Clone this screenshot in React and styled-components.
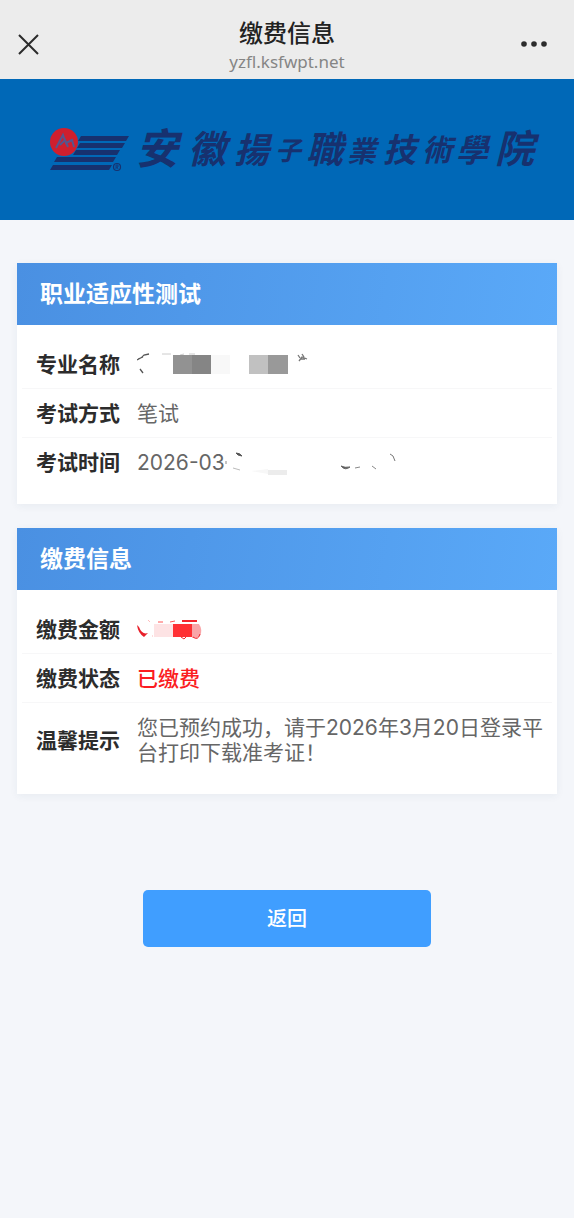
import React from 'react';
import styled, { createGlobalStyle } from 'styled-components';

const GlobalStyle = createGlobalStyle`
  * { box-sizing: border-box; }
  body {
    margin: 0;
    background: #f4f6fa;
    color: #303133;
    font-family: Inter, "Noto Sans CJK SC", sans-serif;
  }
`;

const TopBar = styled.header`
  display: flex;
  align-items: center;
  justify-content: space-between;
  height: 79px;
  padding: 13px 16px 0;
  background: #ececec;
`;

const IconButton = styled.button`
  display: flex;
  padding: 0 0 4px;
  border: 0;
  background: none;
  color: #2b2b2b;
  cursor: pointer;
`;

const PageHeading = styled.div`
  text-align: center;
`;

const PageTitle = styled.h1`
  margin: 0;
  font-size: 24px;
  line-height: 32px;
  font-weight: 500;
  color: #222;
`;

const PageHost = styled.div`
  font-family: "Noto Sans", sans-serif;
  font-size: 17px;
  line-height: 24px;
  color: #858585;
`;

const Banner = styled.div`
  display: flex;
  justify-content: center;
  height: 141px;
  background: #0068b7;

  svg {
    width: 100%;
    height: 100%;
  }
`;

const Main = styled.main`
  display: flex;
  flex-direction: column;
  gap: 24px;
  padding: 43px 17px;
`;

const Card = styled.section`
  background: #fff;
  box-shadow: 0 2px 8px rgba(40, 60, 100, 0.06);
`;

const CardTitle = styled.h2`
  margin: 0;
  padding: 15px 23px;
  font-size: 23px;
  line-height: 32px;
  font-weight: 700;
  color: #fff;
  background: linear-gradient(100deg, #4a90e2, #5aa9f8);
`;

const Details = styled.dl`
  margin: 0;
  padding: 15px 5px 17px;
`;

const Row = styled.div`
  display: flex;
  align-items: center;
  padding: 12px 0 12px 14px;
  font-size: 21px;
  line-height: 25px;

  & + & {
    box-shadow: 0 -1px #f7f7f8;
  }
`;

const Label = styled.dt`
  flex: 0 0 101px;
  font-weight: 700;
  color: #2c2c2c;
`;

const Value = styled.dd`
  display: flex;
  flex: 1;
  margin: 0;
  color: ${(p) => (p.$alert ? '#fb1d22' : '#666')};
  font-weight: ${(p) => (p.$alert ? 500 : 400)};

  svg {
    display: block;
    flex: none;
  }
`;

const BackButton = styled.button`
  align-self: center;
  width: 288px;
  max-width: 100%;
  height: 57px;
  margin-top: 72px;
  padding: 0 0 2px;
  border: 0;
  border-radius: 5px;
  background: #409eff;
  color: #fff;
  font-family: inherit;
  font-size: 20px;
  font-weight: 500;
  cursor: pointer;
`;

// Character, left edge, baseline and size within the school wordmark.
const wordmark = [
  ['安', 136, 85, 42],
  ['徽', 188, 84, 38],
  ['揚', 234, 84, 35],
  ['子', 275, 81, 26],
  ['職', 306, 84, 37],
  ['業', 347, 83, 29],
  ['技', 383, 83, 33],
  ['術', 422, 82, 30],
  ['學', 456, 83, 32],
  ['院', 495, 84, 39],
];

function SchoolLogo() {
  return (
    <svg viewBox="0 0 574 141" role="img" aria-label="安徽揚子職業技術學院">
      <path
        fill="#17316f"
        d="M81 57H129L126 62H78ZM80 64H125L122 69H77ZM76 71H120L117 76H73ZM57 78H116L113 83H54ZM53 86H112L109 91H50Z"
      />
      <circle cx="64" cy="63" r="14" fill="#cf1f2e" />
      <path d="M56 69L63 56L66 64L72 61L74 68M60 66L65 61L68 68" fill="none" stroke="#57558d" strokeWidth="2" />
      <circle cx="117" cy="88" r="3.5" fill="none" stroke="#17316f" strokeWidth="1.2" />
      <path d="M116 90V86H118V88H116M117 88L118 90" fill="none" stroke="#17316f" strokeWidth="0.8" />
      <text
        fill="#17316f"
        fontFamily="'Noto Sans CJK TC', sans-serif"
        fontWeight="700"
        fontStyle="italic"
      >
        {wordmark.map(([char, x, y, size]) => (
          <tspan key={char} x={x} y={y} fontSize={size}>{char}</tspan>
        ))}
      </text>
    </svg>
  );
}

function MaskedMajor() {
  return (
    <svg width="174" height="25" viewBox="0 0 174 25" aria-hidden="true">
      <path d="M0 8Q5 6 7 3L12 2M1 7L6 5M3 17L6 21" fill="none" stroke="#555" strokeWidth="1.3" />
      <path d="M25 2H34M43 3L47 2M52 2H58" fill="none" stroke="#ccc" />
      <rect x="36" y="3" width="19" height="19" fill="#929292" />
      <rect x="55" y="3" width="19" height="19" fill="#858585" />
      <rect x="74" y="3" width="19" height="19" fill="#f8f8f8" />
      <rect x="112" y="3" width="19" height="19" fill="#c1c1c1" />
      <rect x="131" y="3" width="20" height="19" fill="#999" />
      <path d="M161 3L163 6M165 2L167 5M162 9L165 5L170 7M164 7H168" fill="none" stroke="#777" strokeWidth="1.3" />
    </svg>
  );
}

function MaskedTime() {
  return (
    <svg width="180" height="25" viewBox="0 0 180 25" aria-hidden="true">
      <path d="M1 11V14" stroke="#888" />
      <path d="M11 3Q15 3 17 6L13 5Z" fill="#555" stroke="#555" />
      <path d="M8 18L15 20" stroke="#bbb" />
      <path d="M26 21L43 19V24Z" fill="#f7f7f7" />
      <rect x="43" y="20" width="19" height="5" fill="#ececec" />
      <path d="M116 16Q120 18 125 17Q120 21 116 16Z" fill="#555" stroke="#666" />
      <path d="M130 18L135 17M147 16L151 19" stroke="#888" />
      <path d="M165 4L168 6L170 11" fill="none" stroke="#777" />
    </svg>
  );
}

function MaskedAmount() {
  return (
    <svg width="68" height="25" viewBox="0 0 68 25" aria-hidden="true">
      <path d="M0 8L2 10Q5 18 11 16L7 20Q1 16 0 8" fill="#e8202a" />
      <path d="M11 3L13 5M15 19H16" stroke="#fbb" />
      <rect x="17" y="7" width="19" height="13" fill="#fde3e4" />
      <path d="M21 5H26M33 5L38 4" stroke="#f55" />
      <path d="M45 4H60" stroke="#f3252c" strokeWidth="2" />
      <rect x="36" y="7" width="19" height="13" fill="#ff3034" />
      <path d="M55 7H62Q66 13 63 19L60 21H55Z" fill="#f9a5a8" />
      <path d="M44 20L47 22L49 20M56 20Q61 24 63 17" fill="none" stroke="#f3252c" />
    </svg>
  );
}

export default function App() {
  return (
    <>
      <GlobalStyle />
      <TopBar>
        <IconButton aria-label="关闭">
          <svg width="38" height="24" viewBox="0 0 38 24" fill="none" stroke="currentColor" strokeWidth="2">
            <path d="M3 3L22 22M22 3L3 22" />
          </svg>
        </IconButton>
        <PageHeading>
          <PageTitle>缴费信息</PageTitle>
          <PageHost>yzfl.ksfwpt.net</PageHost>
        </PageHeading>
        <IconButton aria-label="更多">
          <svg width="38" height="24" viewBox="0 0 38 24" fill="currentColor">
            <circle cx="4" cy="12" r="2.8" />
            <circle cx="14" cy="12" r="2.8" />
            <circle cx="24" cy="12" r="2.8" />
          </svg>
        </IconButton>
      </TopBar>
      <Banner>
        <SchoolLogo />
      </Banner>
      <Main>
        <Card>
          <CardTitle>职业适应性测试</CardTitle>
          <Details>
            <Row>
              <Label>专业名称</Label>
              <Value><MaskedMajor /></Value>
            </Row>
            <Row>
              <Label>考试方式</Label>
              <Value>笔试</Value>
            </Row>
            <Row>
              <Label>考试时间</Label>
              <Value>2026-03<MaskedTime /></Value>
            </Row>
          </Details>
        </Card>
        <Card>
          <CardTitle>缴费信息</CardTitle>
          <Details>
            <Row>
              <Label>缴费金额</Label>
              <Value $alert><MaskedAmount /></Value>
            </Row>
            <Row>
              <Label>缴费状态</Label>
              <Value $alert>已缴费</Value>
            </Row>
            <Row>
              <Label>温馨提示</Label>
              <Value>您已预约成功，请于2026年3月20日登录平台打印下载准考证！</Value>
            </Row>
          </Details>
        </Card>
        <BackButton type="button">返回</BackButton>
      </Main>
    </>
  );
}
